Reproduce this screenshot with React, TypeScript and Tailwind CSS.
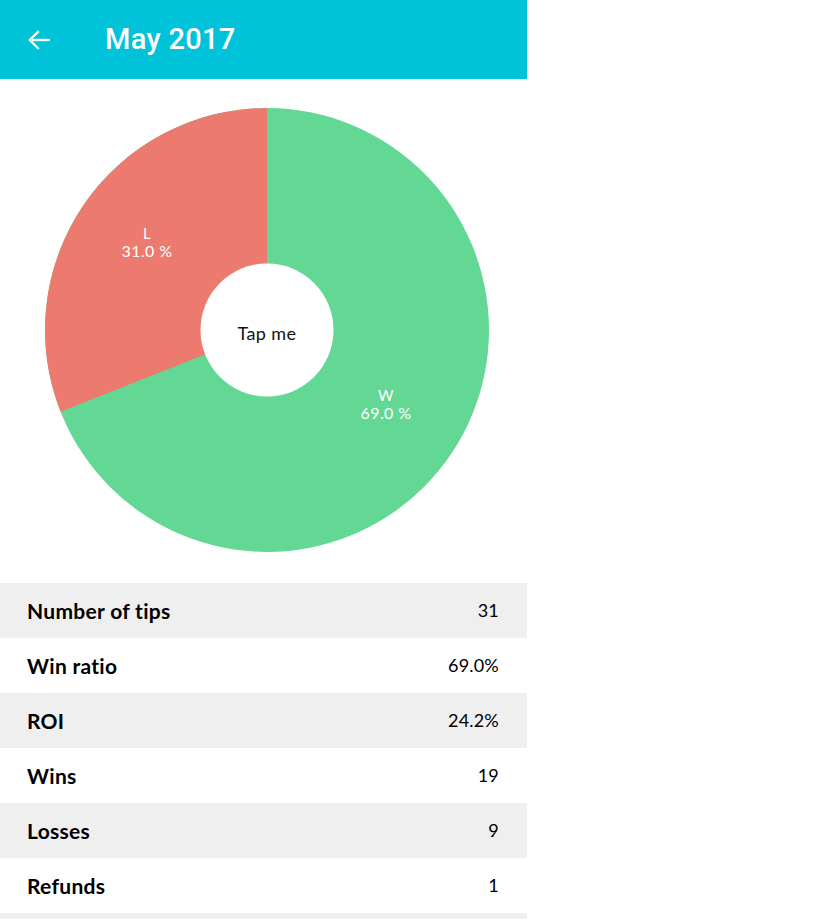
import React from "react";

const stats = [
  { label: "Number of tips", value: "31" },
  { label: "Win ratio", value: "69.0%" },
  { label: "ROI", value: "24.2%" },
  { label: "Wins", value: "19" },
  { label: "Losses", value: "9" },
  { label: "Refunds", value: "1" },
  { label: "", value: "" },
];

function Donut() {
  const cx = 267;
  const cy = 251;
  const r = 222;
  const lossShare = 0.31;
  const a = lossShare * Math.PI * 2;
  // boundary point, going counter-clockwise from 12 o'clock
  const bx = cx - r * Math.sin(a);
  const by = cy - r * Math.cos(a);

  return (
    <svg width="527" height="504" viewBox="0 0 527 504" className="block">
      <circle cx={cx} cy={cy} r={r} fill="#63d895" />
      <path
        d={`M ${cx} ${cy} L ${cx} ${cy - r} A ${r} ${r} 0 0 0 ${bx} ${by} Z`}
        fill="#ed7a6e"
      />
      <circle cx={cx} cy={cy} r={66.5} fill="#ffffff" />
      <g
        fontFamily="Lato, 'Noto Sans', sans-serif"
        fill="#ffffff"
        letterSpacing="0.4"
        textAnchor="middle"
      >
        <text x={147} y={160} fontSize="15">L</text>
        <text x={147} y={178} fontSize="16">31.0 %</text>
        <text x={386} y={322} fontSize="15">W</text>
        <text x={386} y={340} fontSize="16">69.0 %</text>
      </g>
      <text
        x={cx}
        y={261}
        textAnchor="middle"
        fontFamily="Lato, 'Noto Sans', sans-serif"
        fontSize="18"
        letterSpacing="0.4"
        fill="#111111"
      >
        Tap me
      </text>
    </svg>
  );
}

export default function App() {
  return (
    <div className="w-[819px] h-[919px] overflow-hidden bg-white">
      <div className="w-[527px]">
        <header className="h-[79px] bg-[#00c3da] flex items-center text-white">
          <svg
            width="26"
            height="26"
            viewBox="0 0 24 24"
            className="ml-[26px]"
            fill="none"
            stroke="white"
            strokeWidth="2.2"
            strokeLinecap="square"
          >
            <path d="M21 12H4" />
            <path d="M11 4.5L3.5 12L11 19.5" />
          </svg>
          <h1 className="ml-[53px] text-[29px] font-medium font-['Roboto',sans-serif] tracking-[0.3px]">
            May 2017
          </h1>
        </header>

        <Donut />

        <div className="font-['Lato','Noto_Sans',sans-serif]">
          {stats.map((s, i) => (
            <div
              key={i}
              className={`h-[55px] flex items-center justify-between pl-[27px] pr-[28px] ${
                i % 2 === 0 ? "bg-[#efefef]" : "bg-white"
              }`}
            >
              <span className="text-[21px] font-bold text-black tracking-[0.3px]">
                {s.label}
              </span>
              <span className="text-[18px] text-black tracking-[0.2px]">{s.value}</span>
            </div>
          ))}
        </div>
      </div>
    </div>
  );
}
